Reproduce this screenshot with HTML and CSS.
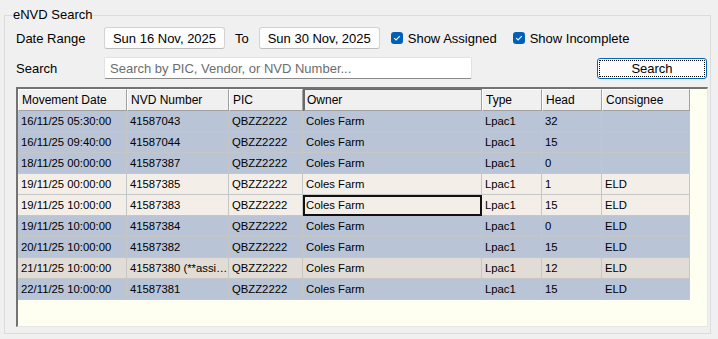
FILE: index.html
```html
<!DOCTYPE html>
<html lang="en">
<head>
  <meta charset="UTF-8">
  <meta name="viewport" content="width=device-width, initial-scale=1.0">
  <title>eNVD Search</title>
  <link rel="stylesheet" href="styles.css">
</head>
<body>
  <fieldset class="group">
    <legend>eNVD Search</legend>

    <!-- filters -->
    <div class="filter-row">
      <span class="label">Date Range</span>
      <button class="date-btn">Sun 16 Nov, 2025</button>
      <span class="to">To</span>
      <button class="date-btn">Sun 30 Nov, 2025</button>
      <label class="check">
        <span class="box"><svg width="12" height="12" viewBox="0 0 12 12"><path d="M3.2 6.1 L5.1 8 L8.8 4.2" stroke="#fff" stroke-width="1.1" fill="none"/></svg></span>
        Show Assigned
      </label>
      <label class="check">
        <span class="box"><svg width="12" height="12" viewBox="0 0 12 12"><path d="M3.2 6.1 L5.1 8 L8.8 4.2" stroke="#fff" stroke-width="1.1" fill="none"/></svg></span>
        Show Incomplete
      </label>
    </div>

    <div class="search-row">
      <span class="label">Search</span>
      <input class="search-input" type="text" placeholder="Search by PIC, Vendor, or NVD Number...">
      <button class="search-btn">Search</button>
    </div>

    <!-- results grid -->
    <div class="grid">
      <div class="grid-head">
        <span>Movement Date</span>
        <span>NVD Number</span>
        <span>PIC</span>
        <span class="pressed">Owner</span>
        <span>Type</span>
        <span>Head</span>
        <span>Consignee</span>
      </div>
      <div class="grid-row blue">
        <span>16/11/25 05:30:00</span><span>41587043</span><span>QBZZ2222</span><span>Coles Farm</span><span>Lpac1</span><span>32</span><span></span>
      </div>
      <div class="grid-row blue">
        <span>16/11/25 09:40:00</span><span>41587044</span><span>QBZZ2222</span><span>Coles Farm</span><span>Lpac1</span><span>15</span><span></span>
      </div>
      <div class="grid-row blue">
        <span>18/11/25 00:00:00</span><span>41587387</span><span>QBZZ2222</span><span>Coles Farm</span><span>Lpac1</span><span>0</span><span></span>
      </div>
      <div class="grid-row cream">
        <span>19/11/25 00:00:00</span><span>41587385</span><span>QBZZ2222</span><span>Coles Farm</span><span>Lpac1</span><span>1</span><span>ELD</span>
      </div>
      <div class="grid-row cream">
        <span>19/11/25 10:00:00</span><span>41587383</span><span>QBZZ2222</span><span class="focus">Coles Farm</span><span>Lpac1</span><span>15</span><span>ELD</span>
      </div>
      <div class="grid-row blue">
        <span>19/11/25 10:00:00</span><span>41587384</span><span>QBZZ2222</span><span>Coles Farm</span><span>Lpac1</span><span>0</span><span>ELD</span>
      </div>
      <div class="grid-row blue">
        <span>20/11/25 10:00:00</span><span>41587382</span><span>QBZZ2222</span><span>Coles Farm</span><span>Lpac1</span><span>15</span><span>ELD</span>
      </div>
      <div class="grid-row beige">
        <span>21/11/25 10:00:00</span><span>41587380 (**assigned**)</span><span>QBZZ2222</span><span>Coles Farm</span><span>Lpac1</span><span>12</span><span>ELD</span>
      </div>
      <div class="grid-row blue">
        <span>22/11/25 10:00:00</span><span>41587381</span><span>QBZZ2222</span><span>Coles Farm</span><span>Lpac1</span><span>15</span><span>ELD</span>
      </div>
    </div>
  </fieldset>
</body>
</html>
```

FILE: styles.css
```css
body {
  margin: 0;
  background-color: #f0f0f0;
  font-family: "Liberation Sans", Arial, sans-serif;
  font-size: 13px;
  color: #000;
}
.group {
  margin: 7px 7px 0 4px;
  padding: 4px 2px 6px 8px;
  border: 1px solid #dcdcdc;
  min-width: 0;
}
.group legend {
  padding: 0;
  font-size: 13px;
  line-height: 16px;
}
.filter-row,
.search-row {
  display: flex;
  align-items: center;
  height: 22px;
  padding-left: 3px;
}
.search-row {
  margin-top: 8px;
}
.label {
  width: 88px;
}
.date-btn {
  width: 121px;
  height: 22px;
  padding: 0;
  font: inherit;
  color: #000;
  background-color: #fdfdfd;
  border: 1px solid #d3d3d3;
  border-bottom-color: #bdbdbd;
  border-radius: 3px;
}
.to {
  margin: 0 10px;
}
.check {
  display: flex;
  align-items: center;
  margin-left: 11px;
}
.check + .check {
  margin-left: 16px;
}
.box {
  display: flex;
  width: 12px;
  height: 12px;
  margin-right: 5px;
  border-radius: 3px;
  background-color: #005fb8;
}
.search-input {
  width: 368px;
  height: 22px;
  box-sizing: border-box;
  padding: 0 5px;
  font: inherit;
  background-color: #fff;
  border: 1px solid #e2e2e2;
  border-bottom-color: #8a8a8a;
  border-radius: 2px;
}
.search-input::placeholder {
  color: #6d6d6d;
}
.search-btn {
  width: 110px;
  height: 21px;
  margin-left: auto;
  margin-right: 1px;
  padding: 0;
  font: inherit;
  color: #000;
  background-color: #fdfdfd;
  border: 1px solid #0067c0;
  border-radius: 3px;
  outline: 1px dotted #000;
  outline-offset: -3px;
}
.grid {
  height: 240px;
  box-sizing: border-box;
  margin: 8px 0 0 3px;
  background-color: #fefff0;
  border-top: 2px solid #737373;
  border-left: 2px solid #737373;
  border-right: 1px solid #e6e6e6;
  border-bottom: 1px solid #e6e6e6;
  overflow: hidden;
}
.grid-head,
.grid-row {
  display: grid;
  grid-template-columns: 109px 102px 74px 179px 60px 60px 88px;
  width: 672px;
}
.grid-head span {
  height: 22px;
  box-sizing: border-box;
  padding-left: 3px;
  font-size: 12px;
  line-height: 20px;
  background-color: #f0f0f0;
  border: 1px solid;
  border-color: #fff #a0a0a0 #a0a0a0 #fff;
}
.grid-head .pressed {
  border-color: #6a6a6a #a0a0a0 #a0a0a0 #6a6a6a;
  border-left-width: 2px;
  padding-left: 2px;
}
.grid-row span {
  height: 21px;
  box-sizing: border-box;
  padding: 0 0 0 3px;
  font-size: 11.3px;
  line-height: 20px;
  white-space: nowrap;
  overflow: hidden;
  text-overflow: ellipsis;
  border-right: 1px solid #c6c6c6;
  border-bottom: 1px solid #c6c6c6;
}
.grid-row .focus {
  outline: 2px solid #111;
  outline-offset: -2px;
}
.blue {
  background-color: #b9c4d6;
}
.cream {
  background-color: #f3efe8;
}
.beige {
  background-color: #e1ddd6;
}
```
